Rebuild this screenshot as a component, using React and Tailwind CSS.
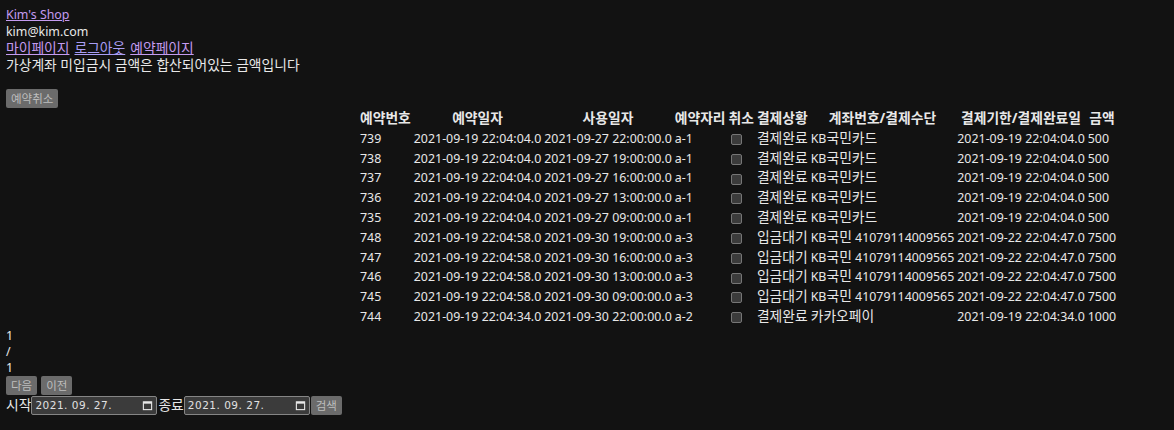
import React from "react";

const ROWS = [
  ["739", "2021-09-19 22:04:04.0", "2021-09-27 22:00:00.0", "a-1", "결제완료", ["KB", "국민카드", ""], "2021-09-19 22:04:04.0", "500"],
  ["738", "2021-09-19 22:04:04.0", "2021-09-27 19:00:00.0", "a-1", "결제완료", ["KB", "국민카드", ""], "2021-09-19 22:04:04.0", "500"],
  ["737", "2021-09-19 22:04:04.0", "2021-09-27 16:00:00.0", "a-1", "결제완료", ["KB", "국민카드", ""], "2021-09-19 22:04:04.0", "500"],
  ["736", "2021-09-19 22:04:04.0", "2021-09-27 13:00:00.0", "a-1", "결제완료", ["KB", "국민카드", ""], "2021-09-19 22:04:04.0", "500"],
  ["735", "2021-09-19 22:04:04.0", "2021-09-27 09:00:00.0", "a-1", "결제완료", ["KB", "국민카드", ""], "2021-09-19 22:04:04.0", "500"],
  ["748", "2021-09-19 22:04:58.0", "2021-09-30 19:00:00.0", "a-3", "입금대기", ["KB", "국민", " 41079114009565"], "2021-09-22 22:04:47.0", "7500"],
  ["747", "2021-09-19 22:04:58.0", "2021-09-30 16:00:00.0", "a-3", "입금대기", ["KB", "국민", " 41079114009565"], "2021-09-22 22:04:47.0", "7500"],
  ["746", "2021-09-19 22:04:58.0", "2021-09-30 13:00:00.0", "a-3", "입금대기", ["KB", "국민", " 41079114009565"], "2021-09-22 22:04:47.0", "7500"],
  ["745", "2021-09-19 22:04:58.0", "2021-09-30 09:00:00.0", "a-3", "입금대기", ["KB", "국민", " 41079114009565"], "2021-09-22 22:04:47.0", "7500"],
  ["744", "2021-09-19 22:04:34.0", "2021-09-30 22:00:00.0", "a-2", "결제완료", ["", "카카오페이", ""], "2021-09-19 22:04:34.0", "1000"],
];

const HEAD = ["예약번호", "예약일자", "사용일자", "예약자리", "취소", "결제상황", "계좌번호/결제수단", "결제기한/결제완료일", "금액"];

// Hangul runs a bit larger than the latin text, like Malgun Gothic does
function K({ children }) {
  return <span className="text-[13.8px] leading-[14px]">{children}</span>;
}

function Btn({ children }) {
  return (
    <button
      type="button"
      className="h-[19px] px-[5px] rounded-[2px] bg-[#6b6b6b] text-[#bdbdbd] text-[11.5px] leading-[19px] align-middle"
    >
      {children}
    </button>
  );
}

function CalendarGlyph() {
  return (
    <svg width="11" height="11" viewBox="0 0 12 12" aria-hidden="true" className="shrink-0">
      <rect x="1.5" y="2" width="9" height="8.5" fill="none" stroke="#e8e8e8" strokeWidth="1.2" />
      <rect x="1.5" y="2" width="9" height="2" fill="#e8e8e8" />
    </svg>
  );
}

function DateBox() {
  return (
    <span className="inline-flex items-center justify-between w-[126px] h-[19px] border border-[#858585] rounded-[2px] bg-[#3b3b3b] px-[3px] align-middle">
      <span className="text-[10.5px] text-[#e0e0e0] tracking-[0.5px]" style={{ fontFamily: '"DejaVu Sans", sans-serif' }}>
        2021. 09. 27.
      </span>
      <CalendarGlyph />
    </span>
  );
}

const cell = "px-[1px] py-[1px] leading-[16.8px] whitespace-nowrap";

export default function App() {
  return (
    <div
      className="min-h-[430px] bg-[#121212] text-[#e8e8e8] text-[12.4px] leading-[17px] px-[6px] pt-[6px]"
      style={{ fontFamily: '"Noto Sans", "Noto Sans CJK KR", sans-serif' }}
    >
      <div><a href="#" className="text-[#c49bf0] underline">Kim's Shop</a></div>
      <div>kim@kim.com</div>
      <div className="flex gap-[5px]">
        <a href="#" className="text-[#c49bf0] underline"><K>마이페이지</K></a>
        <a href="#" className="text-[#a99ef5] underline"><K>로그아웃</K></a>
        <a href="#" className="text-[#c49bf0] underline"><K>예약페이지</K></a>
      </div>
      <div><K>가상계좌 미입금시 금액은 합산되어있는 금액입니다</K></div>

      <div className="mt-[15px] h-[18px]">
        <Btn>예약취소</Btn>
      </div>

      <table className="mt-[2px] ml-[352px] border-separate border-spacing-[1px]">
        <thead>
          <tr>
            {HEAD.map((h) => (
              <th key={h} className={`font-bold text-center ${cell}`}><K>{h}</K></th>
            ))}
          </tr>
        </thead>
        <tbody>
          {ROWS.map((r) => (
            <tr key={r[0]}>
              <td className={cell}>{r[0]}</td>
              <td className={cell}>{r[1]}</td>
              <td className={cell}>{r[2]}</td>
              <td className={cell}>{r[3]}</td>
              <td className={cell}>
                <span className="inline-block ml-[2px] w-[11px] h-[11px] rounded-[2px] border border-[#767676] bg-[#3b3b3b] align-middle" />
              </td>
              <td className={cell}><K>{r[4]}</K></td>
              <td className={cell}>{r[5][0]}<K>{r[5][1]}</K>{r[5][2]}</td>
              <td className={cell}>{r[6]}</td>
              <td className={cell}>{r[7]}</td>
            </tr>
          ))}
        </tbody>
      </table>

      <div className="leading-[16px]">1</div>
      <div className="leading-[16px]">/</div>
      <div className="leading-[16px]">1</div>
      <div className="flex gap-[4px] h-[19px]">
        <Btn>다음</Btn>
        <Btn>이전</Btn>
      </div>
      <div className="flex items-center h-[19px] mt-[1px]">
        <K>시작</K>
        <DateBox />
        <span className="ml-[1px]"><K>종료</K></span>
        <DateBox />
        <span className="ml-[1px]"><Btn>검색</Btn></span>
      </div>
    </div>
  );
}
